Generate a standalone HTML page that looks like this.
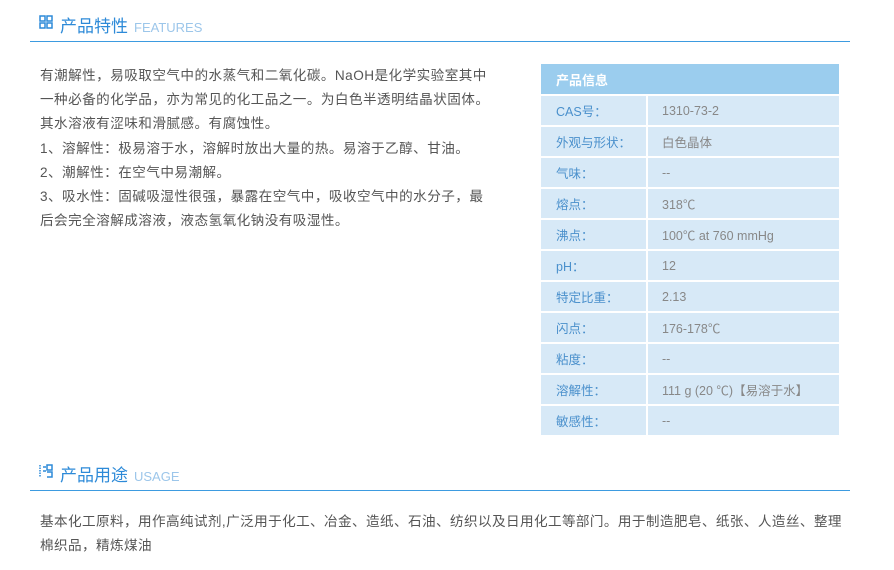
<!DOCTYPE html>
<html><head><meta charset="utf-8"><style>
body{margin:0;background:#fff;font-family:"Liberation Sans","Noto Sans CJK SC",sans-serif;width:894px;height:570px;overflow:hidden;position:relative}
.h{position:absolute;left:30px;width:820px;border-bottom:1px solid #3d9be0;height:40px}
.h .t{position:absolute;left:30px;top:11px;font-size:17px;color:#2d8ad8}
.h .e{font-size:13px;color:#9cc6ea;margin-left:6px}
.ic{position:absolute;left:9px;top:14px}
.txt{position:absolute;left:40px;top:64px;width:480px;font-size:13.6px;letter-spacing:0.45px;line-height:24.2px;color:#555;white-space:nowrap}
table{position:absolute;left:541px;top:64px;width:298px;border-collapse:collapse;font-size:12.5px}
th{background:#9bcdee;color:#fff;text-align:left;height:28px;padding-left:15px;font-weight:bold;font-size:13px}
td{background:#d7e9f7;height:29px;border-top:2px solid #fff;padding:0}
td.l{width:90px;padding-left:15px;color:#4a90cc;border-right:2px solid #fff}
td.v{padding-left:14px;color:#888}
.u{position:absolute;left:40px;top:510px;width:830px;font-size:13.6px;letter-spacing:0.4px;line-height:24px;color:#555;white-space:nowrap}
</style></head><body>
<div class="h" style="top:1px">
<svg class="ic" width="14" height="14" viewBox="0 0 14 14" fill="none" stroke="#2d8ad8" stroke-width="1.5"><rect x="1" y="1" width="5" height="5"/><rect x="8" y="1" width="5" height="5"/><rect x="1" y="8" width="5" height="5"/><rect x="8" y="8" width="5" height="5"/></svg>
<div class="t">产品特性<span class="e">FEATURES</span></div></div>
<div class="txt">有潮解性，易吸取空气中的水蒸气和二氧化碳。NaOH是化学实验室其中<br>一种必备的化学品，亦为常见的化工品之一。为白色半透明结晶状固体。<br>其水溶液有涩味和滑腻感。有腐蚀性。<br>1、溶解性：极易溶于水，溶解时放出大量的热。易溶于乙醇、甘油。<br>2、潮解性：在空气中易潮解。<br>3、吸水性：固碱吸湿性很强，暴露在空气中，吸收空气中的水分子，最<br>后会完全溶解成溶液，液态氢氧化钠没有吸湿性。</div>
<table>
<tr><th colspan="2">产品信息</th></tr>
<tr><td class="l">CAS号：</td><td class="v">1310-73-2</td></tr>
<tr><td class="l">外观与形状：</td><td class="v">白色晶体</td></tr>
<tr><td class="l">气味：</td><td class="v">--</td></tr>
<tr><td class="l">熔点：</td><td class="v">318℃</td></tr>
<tr><td class="l">沸点：</td><td class="v">100℃ at 760 mmHg</td></tr>
<tr><td class="l">pH：</td><td class="v">12</td></tr>
<tr><td class="l">特定比重：</td><td class="v">2.13</td></tr>
<tr><td class="l">闪点：</td><td class="v">176-178℃</td></tr>
<tr><td class="l">粘度：</td><td class="v">--</td></tr>
<tr><td class="l">溶解性：</td><td class="v">111 g (20 ℃)【易溶于水】</td></tr>
<tr><td class="l">敏感性：</td><td class="v">--</td></tr>
</table>
<div class="h" style="top:450px">
<svg class="ic" width="14" height="14" viewBox="0 0 14 14" fill="none" stroke="#2d8ad8" stroke-width="1.5"><path d="M1 1v12" stroke-dasharray="1.5 1"/><path d="M4 3h3M4 7h3"/><rect x="8" y="1" width="5" height="5"/><path d="M8 8h5v5H8"/></svg>
<div class="t">产品用途<span class="e">USAGE</span></div></div>
<div class="u">基本化工原料，用作高纯试剂,广泛用于化工、冶金、造纸、石油、纺织以及日用化工等部门。用于制造肥皂、纸张、人造丝、整理<br>棉织品，精炼煤油</div>
</body></html>
